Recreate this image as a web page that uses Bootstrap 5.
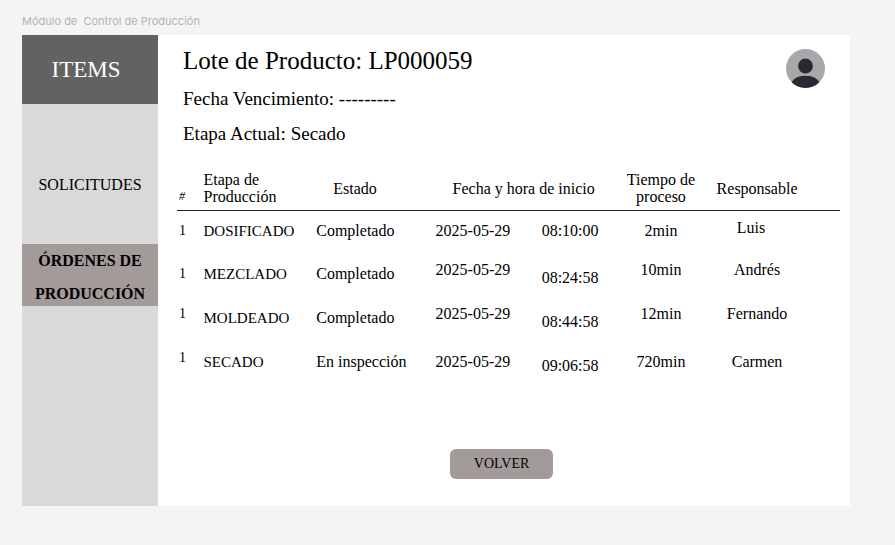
<!DOCTYPE html>
<html lang="es">
<head>
<meta charset="utf-8">
<meta name="viewport" content="width=device-width, initial-scale=1">
<title>Módulo de Control de Producción</title>
<link href="https://cdn.jsdelivr.net/npm/bootstrap@5.3.0/dist/css/bootstrap.min.css" rel="stylesheet">
<style>
  body { background: #f4f4f4; color: #000; font-family: "Liberation Serif", "Times New Roman", serif; font-size: 16px; line-height: 20px; }
  .page { padding: 13px 45px 39px 22px; }
  .frame-name { font: 11px/16px Inter, sans-serif; color: #b3b3b3; margin-bottom: 6px; white-space: pre; }
  .side { flex: 0 0 136px; background: #d9d9d9; }
  .side-title { background: #626262; color: #fff; font-size: 23px; line-height: 69px; padding-right: 8px; }
  .side a { color: #000; }
  .side-link { padding: 71px 0 49px; }
  .side-active { background: #a39a9a; line-height: 33px; height: 62px; }
  .work { padding: 11px 10px 27px 19px; min-width: 0; }
  .lot-head { padding: 0 15px 0 6px; }
  .lot-head h1 { font-size: 25px; line-height: 30px; }
  .lot-head p { font-size: 19px; line-height: 24px; }
  .stack { gap: 11px; }
  .avatar { margin-top: 3px; }
  .stages { margin: 25px 0 66px; table-layout: fixed; white-space: nowrap; }
  .stages th { font-weight: 400; line-height: 17px; padding: 0 0 5px; }
  .stages thead { border-bottom: 1px solid #222; }
  .stages td { padding: 9px 0 7px; height: 44px; }
  .stages tbody tr:first-child td { padding-top: 7px; padding-bottom: 7px; height: 40px; }
  .stages tbody .num { font-size: 14px; padding-left: 2px; }
  .stages thead .num { font-size: 12px; padding-left: 2px; }
  .stages .stage { font-size: 15px; }
  .stages th.inset { padding-left: 17px; }
  .stages tbody tr .person.person, .stages .person { padding-right: 40px; }
  .stages tbody tr:first-child td.person { padding-right: 52px; }
  .back-row { padding-right: 14px; }
  .btn-back { --bs-btn-bg: #a39a9a; --bs-btn-color: #000; --bs-btn-hover-bg: #948b8b; --bs-btn-hover-color: #000; --bs-btn-active-bg: #857c7c; --bs-btn-border-radius: 6px; --bs-btn-font-size: 14px; --bs-btn-line-height: 20px; --bs-btn-padding-y: 5px; --bs-btn-padding-x: 24px; }
</style>
<script src="https://cdn.jsdelivr.net/npm/bootstrap@5.3.0/dist/js/bootstrap.bundle.min.js"></script>
</head>
<body>
<div class="page">
  <div class="frame-name">Módulo de  Control de Producción</div>
  <div class="d-flex bg-white">
    <nav class="side text-center" aria-label="Items">
      <div class="side-title">ITEMS</div>
      <a class="side-link d-block text-decoration-none" href="#solicitudes">SOLICITUDES</a>
      <a class="side-active d-block text-decoration-none fw-bold" href="#ordenes" aria-current="page">ÓRDENES DE<br>PRODUCCIÓN</a>
    </nav>
    <main class="work flex-grow-1">
      <header class="lot-head d-flex justify-content-between align-items-start">
        <div class="stack d-flex flex-column">
          <h1 class="m-0 fw-normal">Lote de Producto: LP000059</h1>
          <p class="m-0">Fecha Vencimiento: ---------</p>
          <p class="m-0">Etapa Actual: Secado</p>
        </div>
        <svg class="avatar" width="39" height="39" viewBox="0 0 39 39" role="img" aria-label="Usuario">
          <defs><clipPath id="disc"><circle cx="19.5" cy="19.5" r="19.5"/></clipPath></defs>
          <g clip-path="url(#disc)">
            <rect width="39" height="39" fill="#a7a8aa"/>
            <circle cx="19.5" cy="17" r="7.4" fill="#282a2f"/>
            <path d="M5 36C6 29.5 12 26.8 19.5 26.8S33 29.5 34 36V39H5Z" fill="#282a2f"/>
          </g>
        </svg>
      </header>
      <table class="stages w-100">
        <colgroup>
          <col style="width:4%"><col style="width:17%"><col style="width:18%"><col style="width:16%"><col style="width:10%"><col style="width:16%"><col style="width:19%">
        </colgroup>
        <thead>
          <tr>
            <th scope="col" class="num align-bottom fst-italic">#</th>
            <th scope="col">Etapa de<br>Producción</th>
            <th scope="col" class="inset">Estado</th>
            <th scope="col" colspan="2" class="inset">Fecha y hora de inicio</th>
            <th scope="col" class="text-center">Tiempo de<br>proceso</th>
            <th scope="col" class="person text-center">Responsable</th>
          </tr>
        </thead>
        <tbody>
          <tr>
            <td class="num">1</td><td class="stage">DOSIFICADO</td><td>Completado</td>
            <td>2025-05-29</td><td>08:10:00</td>
            <td class="text-center">2min</td><td class="person text-center align-top">Luis</td>
          </tr>
          <tr>
            <td class="num">1</td><td class="stage">MEZCLADO</td><td>Completado</td>
            <td class="align-top">2025-05-29</td><td class="align-bottom">08:24:58</td>
            <td class="text-center align-top">10min</td><td class="person text-center align-top">Andrés</td>
          </tr>
          <tr>
            <td class="num align-top">1</td><td class="stage">MOLDEADO</td><td>Completado</td>
            <td class="align-top">2025-05-29</td><td class="align-bottom">08:44:58</td>
            <td class="text-center align-top">12min</td><td class="person text-center align-top">Fernando</td>
          </tr>
          <tr>
            <td class="num align-top">1</td><td class="stage">SECADO</td><td>En inspección</td>
            <td>2025-05-29</td><td class="align-bottom">09:06:58</td>
            <td class="text-center">720min</td><td class="person text-center">Carmen</td>
          </tr>
        </tbody>
      </table>
      <div class="back-row text-center">
        <button type="button" class="btn btn-back border-0">VOLVER</button>
      </div>
    </main>
  </div>
</div>
</body>
</html>
